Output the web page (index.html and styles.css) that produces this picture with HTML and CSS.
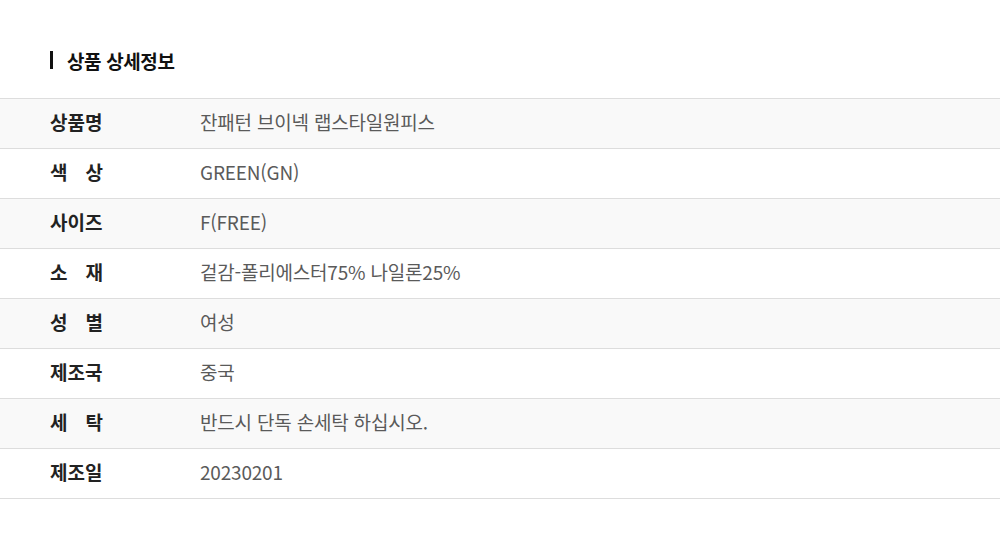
FILE: index.html
```html
<!DOCTYPE html>
<html lang="ko">
<head>
  <meta charset="UTF-8" />
  <meta name="viewport" content="width=device-width, initial-scale=1.0"/>
  <title>상품 상세정보</title>
  <link rel="stylesheet" href="styles.css">
</head>
<body>
  <div class="detail">
    <h2 class="detail-title">상품 상세정보</h2>

    <table class="info-table">
      <tr>
        <th><span class="label">상품명</span></th>
        <td>잔패턴 브이넥 랩스타일원피스</td>
      </tr>
      <tr>
        <th><span class="label">색 상</span></th>
        <td>GREEN(GN)</td>
      </tr>
      <tr>
        <th><span class="label">사이즈</span></th>
        <td>F(FREE)</td>
      </tr>
      <tr>
        <th><span class="label">소 재</span></th>
        <td>겉감-폴리에스터75% 나일론25%</td>
      </tr>
      <tr>
        <th><span class="label">성 별</span></th>
        <td>여성</td>
      </tr>
      <tr>
        <th><span class="label">제조국</span></th>
        <td>중국</td>
      </tr>
      <tr>
        <th><span class="label">세 탁</span></th>
        <td>반드시 단독 손세탁 하십시오.</td>
      </tr>
      <tr>
        <th><span class="label">제조일</span></th>
        <td>20230201</td>
      </tr>
    </table>
  </div>
</body>
</html>
```

FILE: styles.css
```css
* { margin: 0; padding: 0; box-sizing: border-box; }

body {
  font-family: "Noto Sans CJK KR", "Noto Sans", sans-serif;
  background: #fff;
  color: #222;
}

.detail {
  padding-top: 48px;
}

.detail-title {
  display: flex;
  align-items: center;
  gap: 14px;
  margin-left: 50px;
  height: 24px;
  font-size: 19px;
  font-weight: 700;
  letter-spacing: -0.02em;
  color: #111;
  margin-bottom: 26px;
}

.detail-title::before {
  content: "";
  width: 3px;
  height: 18px;
  background: #111;
}

.info-table {
  width: 100%;
  border-collapse: collapse;
  border-top: 1px solid #ddd;
}

.info-table tr {
  height: 50px;
  border-bottom: 1px solid #ddd;
}

.info-table tr:nth-child(odd) {
  background: #f9f9f9;
}

.info-table th,
.info-table td {
  padding-bottom: 4px;
  font-size: 19px;
}

.info-table th {
  width: 200px;
  padding-left: 50px;
  text-align: left;
  font-weight: 700;
  color: #222;
}

.label {
  display: inline-block;
  width: 53px;
  text-align-last: justify;
}

.info-table td {
  font-weight: 400;
  color: #5a5a5a;
  letter-spacing: -0.2px;
}
```
